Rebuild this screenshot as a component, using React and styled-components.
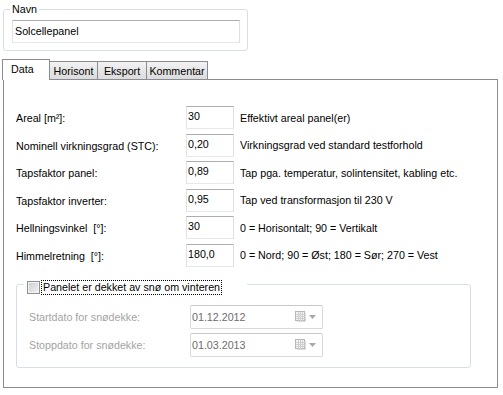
import React from "react";
import styled, { createGlobalStyle } from "styled-components";

const Global = createGlobalStyle`
  html, body { margin: 0; padding: 0; background: #fff; }
  body {
    font-family: "Liberation Sans", Arial, sans-serif;
    font-size: 10.7px;
    color: #000;
  }
  #root { width: 503px; height: 395px; overflow: hidden; }
`;

const Window = styled.div`
  width: 503px;
  height: 395px;
  box-sizing: border-box;
  padding: 2px 5px 0 3px;
  display: flex;
  flex-direction: column;
  background: #fff;
`;

const Group = styled.fieldset`
  margin: 0;
  min-width: 0;
  box-sizing: border-box;
  border: 1px solid #d5dfe5;
  border-radius: 3px;
`;

const NameGroup = styled(Group)`
  width: 245px;
  padding: 4px 7px 7px 8px;
`;

const NameLegend = styled.legend`
  margin-left: -2px;
  padding: 0 2px;
  line-height: 14px;
`;

const TextBox = styled.div`
  box-sizing: border-box;
  height: 23px;
  border: 1px solid;
  border-color: #abadb3 #dbdfe6 #e3e9ef #e2e3ea;
  background: #fff;
  padding: 3px 2px 0 2px;
  line-height: 14px;
  white-space: nowrap;
`;

const TabStrip = styled.div`
  display: flex;
  align-items: flex-end;
  height: 20px;
  margin: 8px 0 0 -1px;
  position: relative;
  z-index: 1;
`;

const Tab = styled.div`
  box-sizing: border-box;
  width: ${(p) => p.$w}px;
  border: 1px solid #898c95;
  border-bottom: none;
  margin-left: ${(p) => (p.$first ? 0 : -1)}px;
  line-height: 15px;
  white-space: nowrap;
  overflow: hidden;
  ${(p) =>
    p.$active
      ? `
    height: 21px;
    margin-bottom: -1px;
    background: #fff;
    padding: 2px 0 0 8px;
    position: relative;
    z-index: 2;
  `
      : `
    height: 18px;
    background: linear-gradient(#f3f3f3, #e6e6e6 50%, #dcdcdc);
    padding: 2px 0 0 0;
    text-align: center;
  `}
`;

const TabPanel = styled.div`
  box-sizing: border-box;
  width: 495px;
  height: 309px;
  border: 1px solid #898c95;
  background: #fff;
  padding: 26px 0 0 12px;
`;

const FormGrid = styled.div`
  display: grid;
  grid-template-columns: 164px 48px 1fr;
  grid-auto-rows: 23px;
  column-gap: 6px;
  row-gap: 4.6px;
  align-items: center;
`;

const Label = styled.div`
  white-space: pre;
  line-height: 14px;
  padding-top: 1px;
`;

const ValueBox = styled(TextBox)`
  padding: 2px 1px 0 1px;
`;

const Desc = styled.div`
  white-space: nowrap;
  line-height: 14px;
`;

const SnowGroup = styled(Group)`
  width: 455px;
  margin-top: 9px;
  padding: 11px 0 10px 12px;
`;

const SnowLegend = styled.legend`
  display: block;
  box-sizing: border-box;
  width: 223px;
  margin-left: -5px;
  padding: 5px 0 0 3px;
  line-height: 14px;
`;

const LegendContent = styled.span`
  display: flex;
  align-items: center;
  gap: 2px;
`;

const CheckBox = styled.span`
  box-sizing: border-box;
  width: 13px;
  height: 13px;
  border: 1px solid #8e8f8f;
  background: linear-gradient(135deg, #c9ccd1, #f1f2f3);
  box-shadow: inset 0 0 0 1px #f4f4f4;
  flex: none;
`;

const FocusLabel = styled.span`
  outline: 1px dotted #000;
  outline-offset: 0;
  padding: 0 1px;
  line-height: 13px;
  white-space: nowrap;
`;

const DateGrid = styled.div`
  display: grid;
  grid-template-columns: 161px 133px;
  grid-auto-rows: 24px;
  row-gap: 4px;
  align-items: center;
`;

const DisabledLabel = styled.div`
  color: #a3a3a3;
  white-space: nowrap;
  line-height: 14px;
`;

const DateBox = styled.div`
  box-sizing: border-box;
  height: 24px;
  border: 1px solid #d9d9d9;
  border-top-color: #c9c9c9;
  border-radius: 2px;
  background: #fff;
  display: flex;
  align-items: center;
  justify-content: space-between;
  padding: 0 6px 0 1px;
  color: #6d6d6d;
`;

const DateIcons = styled.span`
  display: flex;
  align-items: center;
  gap: 3px;
`;

const CalendarIcon = () => (
  <svg width="11" height="11" viewBox="0 0 11 11">
    <rect x="0.5" y="0.5" width="9" height="9" fill="#f4f4f4" stroke="#b8b8b8" />
    <path d="M1 3.5H10M1 5.5H10M1 7.5H10M3.5 1V10M5.5 1V10M7.5 1V10" stroke="#d0d0d0" strokeWidth="1" />
    <path d="M10.5 2V10.5H2" stroke="#dcdcdc" fill="none" />
  </svg>
);

const ArrowIcon = () => (
  <svg width="7" height="4" viewBox="0 0 7 4">
    <path d="M0 0H7L3.5 4Z" fill="#a8a8a8" />
  </svg>
);

const rows = [
  ["Areal [m²]:", "30", "Effektivt areal panel(er)"],
  ["Nominell virkningsgrad (STC):", "0,20", "Virkningsgrad ved standard testforhold"],
  ["Tapsfaktor panel:", "0,89", "Tap pga. temperatur, solintensitet, kabling etc."],
  ["Tapsfaktor inverter:", "0,95", "Tap ved transformasjon til 230 V"],
  ["Hellningsvinkel  [°]:", "30", "0 = Horisontalt; 90 = Vertikalt"],
  ["Himmelretning  [°]:", "180,0", "0 = Nord; 90 = Øst; 180 = Sør; 270 = Vest"],
];

const tabs = [
  { name: "Data", w: 48, active: true },
  { name: "Horisont", w: 49 },
  { name: "Eksport", w: 50 },
  { name: "Kommentar", w: 62 },
];

export default function App() {
  return (
    <>
      <Global />
      <Window>
        <NameGroup>
          <NameLegend>Navn</NameLegend>
          <TextBox>Solcellepanel</TextBox>
        </NameGroup>

        <TabStrip>
          {tabs.map((t, i) => (
            <Tab key={t.name} $w={t.w} $active={t.active} $first={i === 0}>
              {t.name}
            </Tab>
          ))}
        </TabStrip>

        <TabPanel>
          <FormGrid>
            {rows.map(([l, v, d]) => (
              <React.Fragment key={l}>
                <Label>{l}</Label>
                <ValueBox>{v}</ValueBox>
                <Desc>{d}</Desc>
              </React.Fragment>
            ))}
          </FormGrid>

          <SnowGroup>
            <SnowLegend>
              <LegendContent>
                <CheckBox />
                <FocusLabel>Panelet er dekket av snø om vinteren</FocusLabel>
              </LegendContent>
            </SnowLegend>
            <DateGrid>
              <DisabledLabel>Startdato for snødekke:</DisabledLabel>
              <DateBox>
                01.12.2012
                <DateIcons>
                  <CalendarIcon />
                  <ArrowIcon />
                </DateIcons>
              </DateBox>
              <DisabledLabel>Stoppdato for snødekke:</DisabledLabel>
              <DateBox>
                01.03.2013
                <DateIcons>
                  <CalendarIcon />
                  <ArrowIcon />
                </DateIcons>
              </DateBox>
            </DateGrid>
          </SnowGroup>
        </TabPanel>
      </Window>
    </>
  );
}
